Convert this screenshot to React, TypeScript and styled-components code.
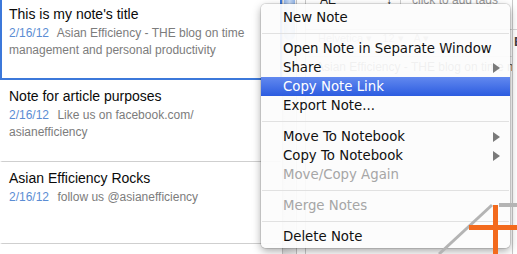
import styled, { createGlobalStyle } from 'styled-components';

const GlobalStyle = createGlobalStyle`
  html, body {
    margin: 0;
    padding: 0;
    background: #fff;
  }
  body {
    width: 517px;
    height: 254px;
    overflow: hidden;
  }
`;

const Screen = styled.div`
  position: relative;
  width: 517px;
  height: 254px;
  overflow: hidden;
  display: flex;
  background: #fff;
  font-family: 'Liberation Sans', Arial, sans-serif;
`;

const NoteList = styled.div`
  width: 282px;
  flex: none;
  display: flex;
  flex-direction: column;
  margin-top: -2px;
`;

const NoteItem = styled.div<{ $selected?: boolean }>`
  box-sizing: border-box;
  height: 82px;
  flex: none;
  padding: 6px 7px 0;
  border-style: solid;
  border-width: ${p => (p.$selected ? '2px' : '2px 2px 1px')};
  border-color: ${p => (p.$selected ? '#3c78da' : 'transparent transparent #cfcfcf')};
`;

const NoteTitle = styled.div`
  font-size: 14px;
  line-height: 17px;
  color: #0a0a0a;
  white-space: nowrap;
`;

const Snippet = styled.div`
  margin-top: 2px;
  font-size: 12px;
  line-height: 17px;
  color: #7c7c7c;
`;

const NoteDate = styled.span`
  color: #5b8dd4;
  margin-right: 5px;
`;

const ScrollGutter = styled.div`
  width: 15px;
  flex: none;
  box-sizing: border-box;
  border-left: 1px solid #c4c4c4;
  border-right: 1px solid #c4c4c4;
  background: linear-gradient(to right, #e4e4e4, #f4f4f4);
  display: flex;
  flex-direction: column;
`;

const ScrollThumb = styled.div`
  height: 40px;
  margin: 0 1px;
  border-radius: 0 0 6px 6px;
  background: linear-gradient(to right, #8fb3e8, #c9dcf6, #8fb3e8);
`;

const Gap = styled.div`
  width: 8px;
  flex: none;
  background: #fff;
`;

const EditorPane = styled.div`
  width: 208px;
  flex: none;
  box-sizing: border-box;
  border-left: 1px solid #c9c9c9;
  border-right: 1px solid #c9c9c9;
  display: flex;
  flex-direction: column;
  overflow: hidden;
`;

const TagBar = styled.div`
  box-sizing: border-box;
  height: 39px;
  margin-top: -9px;
  border-bottom: 1px solid #d6d6d6;
  display: flex;
  align-items: flex-start;
  padding-top: 2px;
  font-size: 12px;
  line-height: 14px;
`;

const NotebookName = styled.div`
  width: 72px;
  padding-left: 14px;
  color: #222;
  display: flex;
  justify-content: space-between;
  padding-right: 8px;
  border-right: 1px solid #cfcfcf;
  height: 14px;
`;

const TagHint = styled.div`
  padding-left: 11px;
  color: #9a9a9a;
  white-space: nowrap;
`;

const FormatBar = styled.div`
  box-sizing: border-box;
  height: 27px;
  display: flex;
  align-items: flex-start;
  padding: 2px 0 0 12px;
  gap: 10px;
  font-size: 11px;
  line-height: 13px;
  color: #999;
  border-bottom: 1px solid #e3e3e3;
  white-space: nowrap;
`;

const EditorBody = styled.div`
  padding: 2px 10px 0;
  font-size: 12px;
  line-height: 16px;
  color: #555;
  white-space: nowrap;
`;

const RightStrip = styled.div`
  flex: 1;
  display: flex;
  flex-direction: column;
  overflow: hidden;
`;

const StripHead = styled.div`
  height: 29px;
  border-bottom: 1px solid #d6d6d6;
`;

const StripButton = styled.div`
  padding: 4px 0 0 1px;
  font-size: 13px;
  font-weight: bold;
  color: #444;
`;

const ContextMenu = styled.div`
  position: absolute;
  left: 261px;
  top: 4px;
  width: 249px;
  box-sizing: border-box;
  padding: 4px 0 2px;
  border-radius: 5px;
  background: rgba(252, 252, 252, 0.93);
  box-shadow: 0 0 0 1px rgba(0, 0, 0, 0.1), 0 3px 8px rgba(0, 0, 0, 0.35);
  font-family: 'DejaVu Sans', 'Lucida Grande', sans-serif;
  font-size: 13.3px;
`;

const MenuItem = styled.div<{ $active?: boolean; $disabled?: boolean }>`
  height: 19px;
  line-height: 19px;
  padding: 0 10px 0 22px;
  display: flex;
  align-items: center;
  justify-content: space-between;
  white-space: nowrap;
  color: ${p => (p.$active ? '#fff' : p.$disabled ? '#a6a6a6' : '#111')};
  background: ${p => (p.$active ? 'linear-gradient(#6289ef, #2c5ce0)' : 'transparent')};
`;

const SubArrow = styled.span<{ $active?: boolean }>`
  width: 0;
  height: 0;
  border-top: 5px solid transparent;
  border-bottom: 5px solid transparent;
  border-left: 7px solid ${p => (p.$active ? '#fff' : '#7a7a7a')};
`;

const MenuSeparator = styled.div`
  height: 12px;
  display: flex;
  align-items: center;
  padding: 0 1px;

  &::after {
    content: '';
    flex: 1;
    height: 1px;
    background: #e1e1e1;
  }
`;

const LogoMark = styled.svg`
  position: absolute;
  left: 0;
  top: 0;
  pointer-events: none;
`;

const notes = [
  {
    title: "This is my note's title",
    date: '2/16/12',
    text: 'Asian Efficiency - THE blog on time management and personal productivity',
    selected: true,
  },
  {
    title: 'Note for article purposes',
    date: '2/16/12',
    text: 'Like us on facebook.com/',
    tail: 'asianefficiency',
  },
  {
    title: 'Asian Efficiency Rocks',
    date: '2/16/12',
    text: 'follow us @asianefficiency',
  },
];

type Entry =
  | { kind: 'item'; label: string; sub?: boolean; active?: boolean; disabled?: boolean }
  | { kind: 'sep' };

const menu: Entry[] = [
  { kind: 'item', label: 'New Note' },
  { kind: 'sep' },
  { kind: 'item', label: 'Open Note in Separate Window' },
  { kind: 'item', label: 'Share', sub: true },
  { kind: 'item', label: 'Copy Note Link', active: true },
  { kind: 'item', label: 'Export Note...' },
  { kind: 'sep' },
  { kind: 'item', label: 'Move To Notebook', sub: true },
  { kind: 'item', label: 'Copy To Notebook', sub: true },
  { kind: 'item', label: 'Move/Copy Again', disabled: true },
  { kind: 'sep' },
  { kind: 'item', label: 'Merge Notes', disabled: true },
  { kind: 'sep' },
  { kind: 'item', label: 'Delete Note' },
];

export default function App() {
  return (
    <>
      <GlobalStyle />
      <Screen>
        <NoteList>
          {notes.map(n => (
            <NoteItem key={n.title} $selected={n.selected}>
              <NoteTitle>{n.title}</NoteTitle>
              <Snippet>
                <NoteDate>{n.date}</NoteDate> {n.text}
                {n.tail && (
                  <>
                    <br />
                    {n.tail}
                  </>
                )}
              </Snippet>
            </NoteItem>
          ))}
        </NoteList>

        <ScrollGutter>
          <ScrollThumb />
        </ScrollGutter>
        <Gap />

        <EditorPane>
          <TagBar>
            <NotebookName>
              <span>AE</span>
              <span>↕</span>
            </NotebookName>
            <TagHint>click to add tags</TagHint>
          </TagBar>
          <FormatBar>
            <span>Helvetica ▾</span>
            <span>12 ▾</span>
            <span>A ▾</span>
          </FormatBar>
          <EditorBody>Asian Efficiency - THE blog on time management</EditorBody>
        </EditorPane>

        <RightStrip>
          <StripHead />
          <StripButton>B</StripButton>
        </RightStrip>

        <ContextMenu>
          {menu.map((e, i) =>
            e.kind === 'sep' ? (
              <MenuSeparator key={i} />
            ) : (
              <MenuItem key={i} $active={e.active} $disabled={e.disabled}>
                <span>{e.label}</span>
                {e.sub && <SubArrow $active={e.active} />}
              </MenuItem>
            )
          )}
        </ContextMenu>

        <LogoMark width="517" height="254" viewBox="0 0 517 254">
          <line x1="439" y1="254" x2="492" y2="205" stroke="#b4b4b4" strokeWidth="3" />
          <line x1="499" y1="205" x2="517" y2="205" stroke="#b4b4b4" strokeWidth="4" />
          <rect x="493" y="205" width="5" height="49" fill="#f36a1d" />
          <rect x="469" y="225" width="48" height="5" fill="#f36a1d" />
        </LogoMark>
      </Screen>
    </>
  );
}
